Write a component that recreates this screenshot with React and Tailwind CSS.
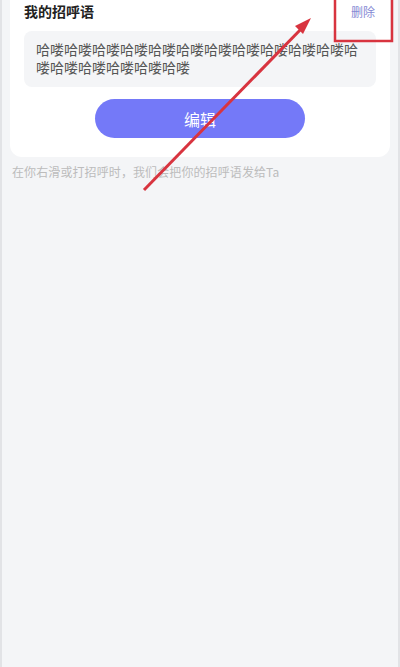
export default function App() {
  const greeting = '哈喽'.repeat(17);
  return (
    <div
      className="relative h-[667px] w-[400px] overflow-hidden border-x-2 border-[#e2e3e6] bg-[#f4f5f7]"
      style={{ fontFamily: '"Noto Sans CJK SC", "Noto Sans", sans-serif' }}
    >
      <div className="mx-2 rounded-b-xl bg-white px-[14px] pb-[19px]">
        <div className="flex h-[23px] items-center justify-between">
          <span className="text-[14px] font-bold text-[#222]">我的招呼语</span>
          <span className="mr-[1px] text-[12px] text-[#8589d4]">删除</span>
        </div>
        <div className="mt-[8px] rounded-lg bg-[#f4f5f7] px-3 pb-[11px] pt-[9px] text-[14px] leading-[18px] text-[#555] break-all">
          {greeting}
        </div>
        <div className="mt-3 flex justify-center">
          <button className="h-[39px] w-[210px] rounded-full bg-[#7479f8] text-[16px] text-white">
            编辑
          </button>
        </div>
      </div>
      <p className="ml-[10px] mt-[6px] text-[12px] tracking-[0.1px] text-[#bcbcbc]">
        在你右滑或打招呼时，我们会把你的招呼语发给Ta
      </p>

      <svg className="pointer-events-none absolute left-0 top-0" width="400" height="667">
        <rect x="333" y="-4" width="57" height="45" fill="none" stroke="#d8343f" strokeWidth="2.5" />
        <line x1="142" y1="190" x2="302" y2="26" stroke="#d8343f" strokeWidth="3" />
        <polygon points="309,18 293,26 301,34" fill="#d8343f" />
      </svg>
    </div>
  );
}
